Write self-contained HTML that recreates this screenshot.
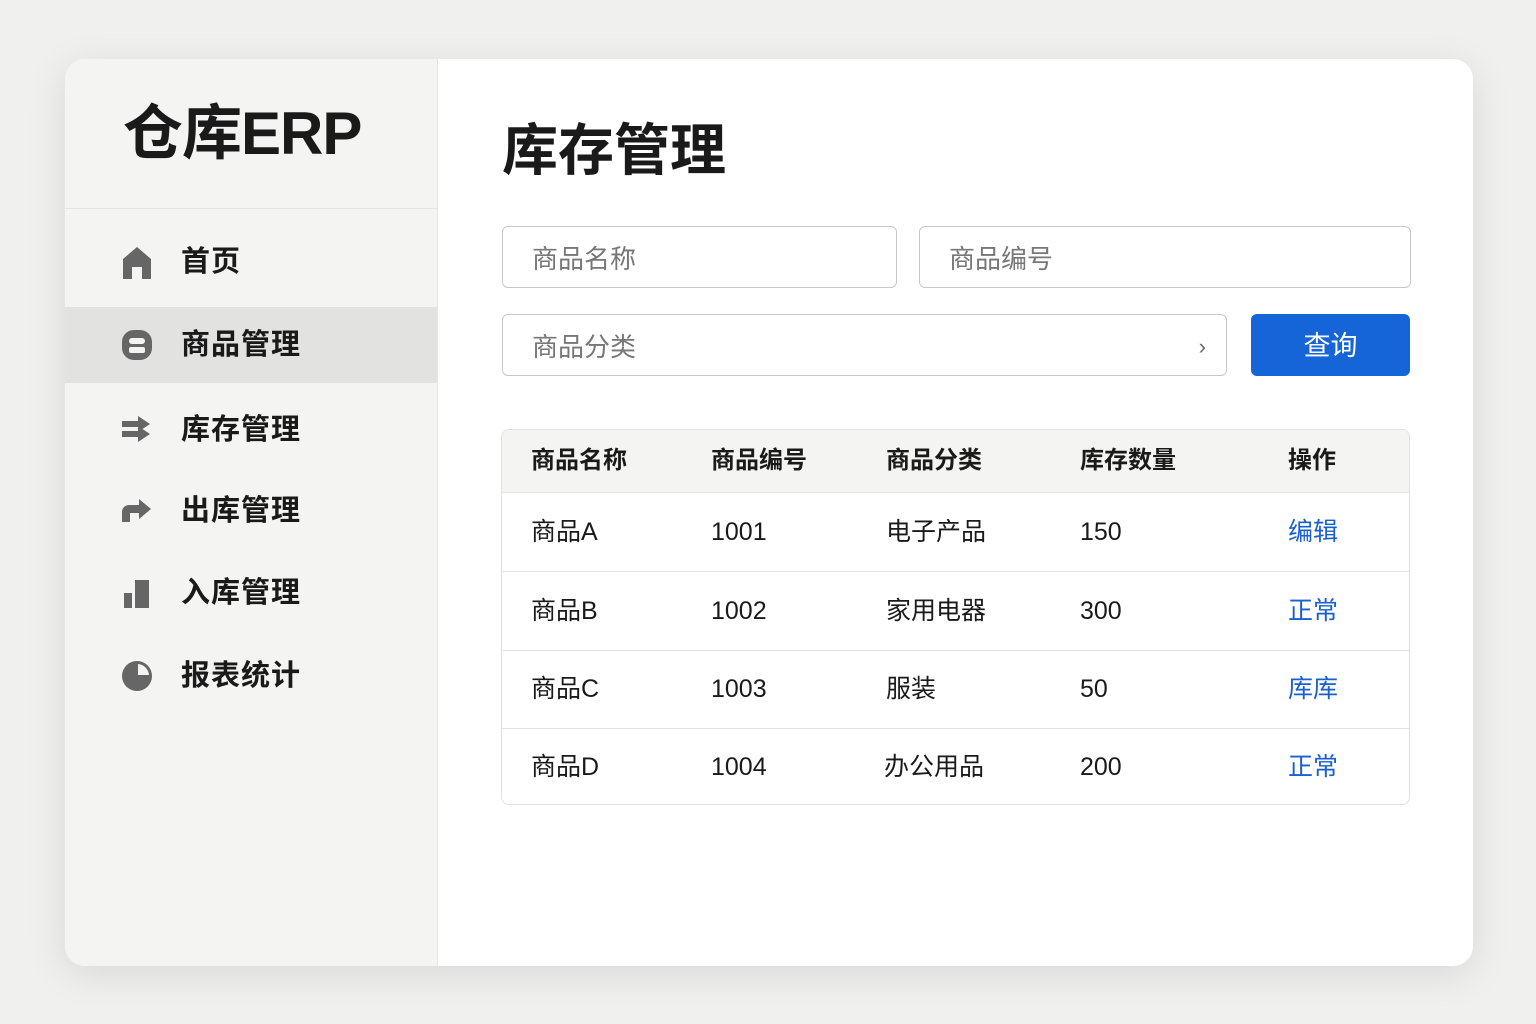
<!DOCTYPE html><html><head><meta charset="utf-8"><style>
*{margin:0;padding:0;box-sizing:border-box}
body{width:1536px;height:1024px;background:#f0f0ee;font-family:"Liberation Sans","Noto Sans CJK SC",sans-serif;position:relative;overflow:hidden;color:#1a1a1a}
.card{position:absolute;left:65px;top:59px;width:1408px;height:907px;background:#fff;border-radius:20px;box-shadow:0 8px 40px rgba(0,0,0,.10);overflow:hidden}
.side{position:absolute;left:0;top:0;width:373px;height:100%;background:#f4f4f2;border-right:1px solid #e6e6e4}
.logo{position:absolute;left:58px;top:30px;font-size:60px;font-weight:bold;letter-spacing:-1px;line-height:90px}
.div{position:absolute;left:0;top:149px;width:100%;height:1px;background:#e4e4e2}
.nav{position:absolute;left:0;width:100%;height:76px;font-size:29px;font-weight:bold}
.nav svg{position:absolute;left:56px;top:50%;transform:translateY(-50%)}
.nav span{position:absolute;left:116px;top:0;line-height:76px;letter-spacing:1px}
.act{background:#e2e2e0}
.t{position:absolute;left:437px;top:52px;font-size:56px;font-weight:bold;line-height:80px}
.in{position:absolute;border:1px solid #c8c8c8;border-radius:6px;height:62px;font-size:26px;color:#777;padding-left:29px;line-height:64px;background:#fff}
.btn{position:absolute;left:1186px;top:255px;width:159px;height:62px;background:#1565d8;border-radius:6px;color:#fff;font-size:27px;text-align:center;line-height:64px}
.tb{position:absolute;left:436px;top:370px;width:909px;height:376px;border:1px solid #e0e0e0;border-radius:8px;overflow:hidden}
.r{position:absolute;left:0;width:100%;border-bottom:1px solid #e2e2e2;font-size:25px}
.r div{position:absolute;top:0;height:100%;display:flex;align-items:center;line-height:1}
.h{background:#f4f4f2;font-weight:bold;font-size:24px}
.lk{color:#1a5fd0}
</style></head><body><div class="card">
<div class="side">
<div class="logo">仓库ERP</div><div class="div"></div>
<div class="nav" style="top:165px"><svg width="32" height="34" viewBox="0 0 32 34"><path d="M2 14 L16 2 L30 14 V34 H21 V22 H11 V34 H2Z" fill="#666"/></svg><span>首页</span></div>
<div class="nav act" style="top:248px"><svg width="32" height="32" viewBox="0 0 32 32"><rect x="1" y="1" width="30" height="30" rx="12" fill="#666"/><rect x="8" y="9" width="16" height="6" rx="3" fill="#f4f4f2"/><rect x="8" y="18" width="16" height="6" rx="2" fill="#f4f4f2"/></svg><span>商品管理</span></div>
<div class="nav" style="top:333px"><svg width="32" height="30" viewBox="0 0 32 30"><path d="M1 6h16V1l12 8-12 8v-5H1z M1 16h16v-5l12 8-12 8v-5H1z" fill="#666"/></svg><span>库存管理</span></div>
<div class="nav" style="top:414px"><svg width="32" height="26" viewBox="0 0 32 26"><path d="M1 24V14c0-4 3-7 7-7h10V1l12 10-12 10v-6H9v9z" fill="#666"/></svg><span>出库管理</span></div>
<div class="nav" style="top:496px"><svg width="32" height="32" viewBox="0 0 32 32"><path d="M3 16h8v15H3z M14 3h14v28H14z" fill="#666"/></svg><span>入库管理</span></div>
<div class="nav" style="top:579px"><svg width="32" height="32" viewBox="0 0 32 32"><circle cx="16" cy="16" r="15" fill="#666"/><path d="M17 4v11h11a12 12 0 0 0-11-11z" fill="#f4f4f2"/></svg><span>报表统计</span></div>
</div>
<div class="t">库存管理</div>
<div class="in" style="left:437px;top:167px;width:395px">商品名称</div>
<div class="in" style="left:854px;top:167px;width:492px">商品编号</div>
<div class="in" style="left:437px;top:255px;width:725px">商品分类<span style="position:absolute;right:20px;font-size:22px;color:#666">›</span></div>
<div class="btn">查询</div>
<div class="tb">
<div class="r h" style="top:0;height:63px"><div style="left:29px">商品名称</div><div style="left:209px">商品编号</div><div style="left:384px">商品分类</div><div style="left:578px">库存数量</div><div style="left:786px">操作</div></div>
<div class="r" style="top:63px;height:79px"><div style="left:29px">商品A</div><div style="left:209px">1001</div><div style="left:384px">电子产品</div><div style="left:578px">150</div><div class="lk" style="left:786px">编辑</div></div>
<div class="r" style="top:142px;height:79px"><div style="left:29px">商品B</div><div style="left:209px">1002</div><div style="left:384px">家用电器</div><div style="left:578px">300</div><div class="lk" style="left:786px">正常</div></div>
<div class="r" style="top:221px;height:78px"><div style="left:29px">商品C</div><div style="left:209px">1003</div><div style="left:384px">服装</div><div style="left:578px">50</div><div class="lk" style="left:786px">库库</div></div>
<div class="r" style="top:299px;height:77px;border:none"><div style="left:29px">商品D</div><div style="left:209px">1004</div><div style="left:382px">办公用品</div><div style="left:578px">200</div><div class="lk" style="left:786px">正常</div></div>
</div>
</div></body></html>
